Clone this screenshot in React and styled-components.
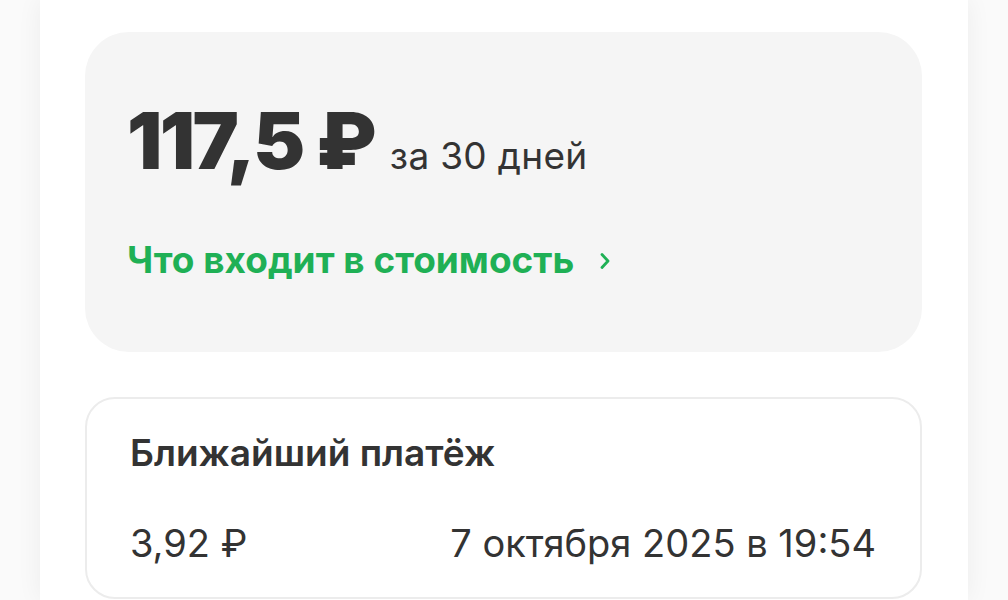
import React from 'react';
import styled, { createGlobalStyle } from 'styled-components';

const GlobalStyle = createGlobalStyle`
  html, body {
    margin: 0;
    padding: 0;
    background: #fafafa;
  }
  body {
    font-family: 'Inter', 'Noto Sans', sans-serif;
    color: #333333;
  }
`;

const Page = styled.div`
  min-height: 600px;
  display: flex;
  justify-content: center;
`;

const Panel = styled.main`
  width: 928px;
  min-height: 600px;
  background: #ffffff;
  box-shadow: 0 0 24px rgba(0, 0, 0, 0.06);
  padding: 32px 46px 0 45px;
  box-sizing: border-box;
  display: flex;
  flex-direction: column;
  gap: 45px;
`;

const PriceCard = styled.section`
  background: #f5f5f5;
  border-radius: 44px;
  height: 320px;
  box-sizing: border-box;
  padding: 70px 42px 0;
  display: flex;
  flex-direction: column;
`;

const PriceRow = styled.div`
  display: flex;
  align-items: baseline;
  gap: 16px;
`;

const Price = styled.span`
  font-size: 78px;
  line-height: 78px;
  font-weight: 900;
  letter-spacing: -2.5px;
  color: #333333;
`;

const Period = styled.span`
  font-size: 37px;
  font-weight: 400;
  letter-spacing: 0.3px;
  color: #333333;
`;

const DetailsLink = styled.a`
  margin-top: 57px;
  display: inline-flex;
  align-items: center;
  gap: 26px;
  font-size: 37px;
  font-weight: 700;
  color: #1fb055;
  text-decoration: none;
  cursor: pointer;
  align-self: flex-start;

  svg {
    margin-top: 2px;
  }
`;

const PaymentCard = styled.section`
  border: 2px solid #ececec;
  border-radius: 30px;
  box-sizing: border-box;
  height: 202px;
  padding: 32px 44px 0 43px;
  display: flex;
  flex-direction: column;
  gap: 46px;
`;

const CardTitle = styled.h2`
  margin: 0;
  font-size: 37px;
  line-height: 44px;
  font-weight: 600;
  color: #333333;
`;

const PaymentRow = styled.div`
  display: flex;
  justify-content: space-between;
  align-items: baseline;
  font-size: 38px;
  line-height: 44px;
  font-weight: 400;
  color: #333333;
`;

const Chevron = () => (
  <svg width="10" height="18" viewBox="0 0 10 18" fill="none">
    <path d="M2 2.5l6 6.5L2 15.5" stroke="currentColor" strokeWidth="2.8" strokeLinecap="round" strokeLinejoin="round" />
  </svg>
);

export default function App() {
  return (
    <>
      <GlobalStyle />
      <Page>
        <Panel>
          <PriceCard>
            <PriceRow>
              <Price>117,5 ₽</Price>
              <Period>за 30 дней</Period>
            </PriceRow>
            <DetailsLink>
              Что входит в стоимость
              <Chevron />
            </DetailsLink>
          </PriceCard>
          <PaymentCard>
            <CardTitle>Ближайший платёж</CardTitle>
            <PaymentRow>
              <span>3,92 ₽</span>
              <span>7 октября 2025 в 19:54</span>
            </PaymentRow>
          </PaymentCard>
        </Panel>
      </Page>
    </>
  );
}
